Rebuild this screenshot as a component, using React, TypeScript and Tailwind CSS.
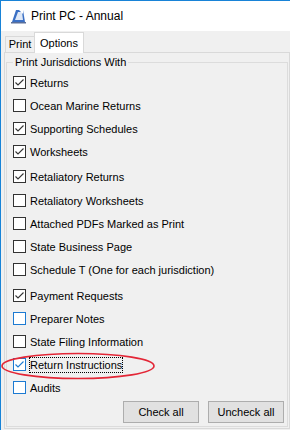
import React from "react";

interface Item {
  label: string;
  checked: boolean;
  blue?: boolean;
  mt?: string;
  focus?: boolean;
}

const items: Item[] = [
  { label: "Returns", checked: true },
  { label: "Ocean Marine Returns", checked: false },
  { label: "Supporting Schedules", checked: true },
  { label: "Worksheets", checked: true },
  { label: "Retaliatory Returns", checked: true, mt: "mt-[2px]" },
  { label: "Retaliatory Worksheets", checked: false, mt: "mt-[1px]" },
  { label: "Attached PDFs Marked as Print", checked: false },
  { label: "State Business Page", checked: false },
  { label: "Schedule T (One for each jurisdiction)", checked: false },
  { label: "Payment Requests", checked: true, mt: "mt-[3px]" },
  { label: "Preparer Notes", checked: false, blue: true },
  { label: "State Filing Information", checked: false },
  { label: "Return Instructions", checked: true, blue: true, focus: true },
  { label: "Audits", checked: false, blue: true },
];

function CheckBox({ checked, blue }: { checked: boolean; blue?: boolean }) {
  return (
    <div
      className={`w-[13px] h-[13px] bg-white border flex items-center justify-center shrink-0 ${
        blue ? "border-[#1c7ad2]" : "border-[#333333]"
      }`}
    >
      {checked && (
        <svg width="11" height="11" viewBox="0 0 11 11" fill="none">
          <path
            d="M1.5 5.5 4 8 9.5 2.5"
            stroke={blue ? "#1c7ad2" : "#333333"}
            strokeWidth="1.1"
          />
        </svg>
      )}
    </div>
  );
}

export default function App() {
  return (
    <div
      className="relative w-[290px] h-[430px] overflow-hidden bg-[#f0f0f0] border-t border-l border-[#1883d7] text-[11px] text-black"
      style={{ fontFamily: "'Liberation Sans', Arial, sans-serif" }}
    >
      {/* Title bar */}
      <div className="h-[30px] bg-white flex items-center pl-[9px]">
        <svg width="16" height="16" viewBox="0 0 16 16">
          <path d="M2 14 6 2h7l2 12z" fill="#3a6fc4" />
          <path d="M5 12 8 4h4l1 8z" fill="#dfe8f6" />
          <path d="M1 14h15v1.5H1z" fill="#5a6f9a" />
          <path d="M9 2l4 0 0 4z" fill="#ffffff" />
        </svg>
        <span className="ml-[5px] text-[12px] text-black">Print PC - Annual</span>
      </div>

      {/* Tabs */}
      <div className="h-[21px] flex items-end pl-[4px]">
        <div className="h-[16px] w-[30px] border border-b-0 border-[#d9d9d9] bg-[#f0f0f0] flex items-center justify-center">
          Print
        </div>
        <div className="h-[21px] w-[50px] border border-b-0 border-[#d9d9d9] bg-white flex items-center justify-center -ml-[1px] relative top-[1px] z-10">
          Options
        </div>
      </div>

      {/* Tab page */}
      <div className="ml-[3px] border border-[#d9d9d9] h-[377px] px-[1px] pt-[9px]">
        <div className="relative border border-[#dcdcdc] h-[365px] pl-[6px] pr-[3px]">
          <div className="absolute -top-[8px] left-[6px] bg-[#f0f0f0] px-[2px] leading-[14px]">
            Print Jurisdictions With
          </div>
          <div className="pt-[8px] flex flex-col">
            {items.map((it) => (
              <div key={it.label} className={`h-[23px] flex items-center gap-[4px] ${it.mt ?? ""}`}>
                <CheckBox checked={it.checked} blue={it.blue} />
                <span
                  className={`whitespace-nowrap leading-[14px] ${
                    it.focus ? "outline outline-1 outline-dotted outline-black" : ""
                  }`}
                >
                  {it.label}
                </span>
              </div>
            ))}
          </div>
          <div className="flex justify-end gap-[9px] mt-[2px]">
            <button className="w-[76px] h-[22px] bg-[#e1e1e1] border border-[#adadad] text-black">
              Check all
            </button>
            <button className="w-[76px] h-[22px] bg-[#e1e1e1] border border-[#adadad] text-black">
              Uncheck all
            </button>
          </div>
        </div>
      </div>

      {/* annotation */}
      <svg className="absolute left-0 top-[351px]" width="160" height="28" viewBox="0 0 160 28">
        <ellipse cx="77" cy="14" rx="76" ry="12.5" fill="none" stroke="#e32636" strokeWidth="1.6" />
      </svg>
    </div>
  );
}
